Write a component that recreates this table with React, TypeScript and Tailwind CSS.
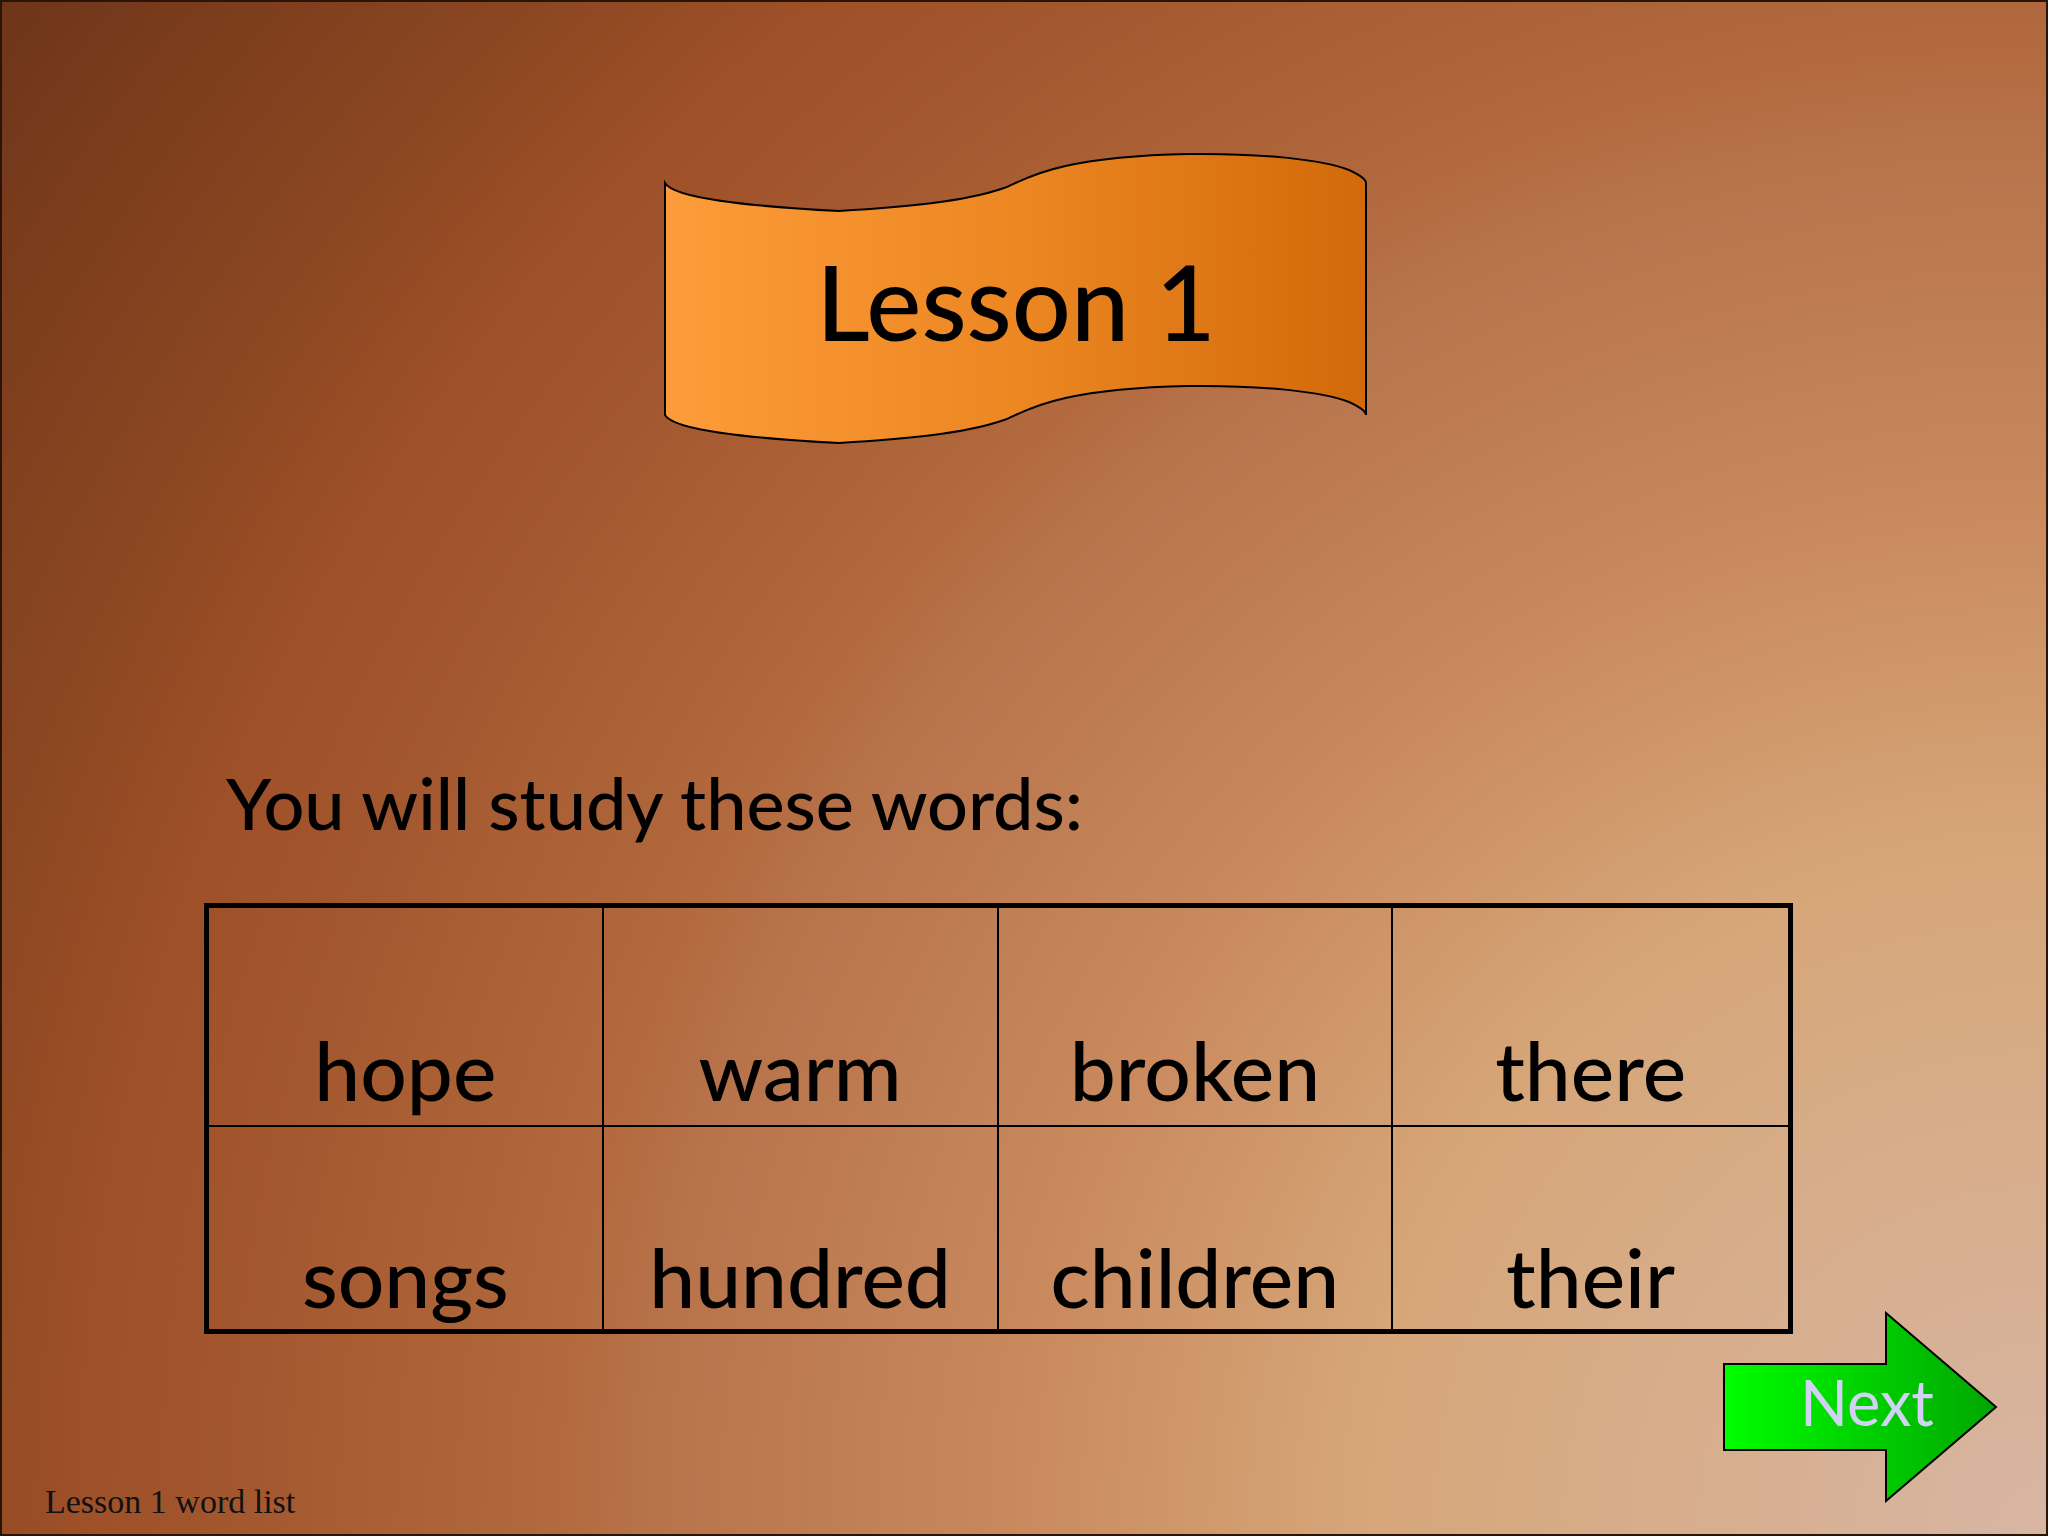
import React from 'react'

const WORDS = [
  ['hope', 'warm', 'broken', 'there'],
  ['songs', 'hundred', 'children', 'their'],
]

// ribbon banner, drawn in local coords of a 704x294 box
const BANNER =
  'M 1 31 C 10 46, 80 54, 175 59 C 240 55, 300 50, 340 36 C 360 29, 385 5, 524 2 C 600 1, 660 8, 685 18 C 698 24, 702 28, 702 31 ' +
  'L 702 263 C 702 260, 698 256, 685 250 C 660 240, 600 233, 524 234 C 385 237, 360 261, 340 268 C 300 282, 240 287, 175 291 C 80 286, 10 278, 1 263 Z'

function Banner() {
  return (
    <div className="relative ml-[662px] mt-[150px] h-[294px] w-[704px]">
      <svg className="absolute inset-0" width="704" height="294" viewBox="0 0 704 294">
        <defs>
          <linearGradient id="bannerFill" x1="0" y1="0" x2="1" y2="0">
            <stop offset="0%" stopColor="#fd9c3a" />
            <stop offset="50%" stopColor="#ec8722" />
            <stop offset="100%" stopColor="#d2690a" />
          </linearGradient>
        </defs>
        <path d={BANNER} fill="url(#bannerFill)" stroke="#000" strokeWidth="2" />
      </svg>
      <div className="relative flex justify-center pt-[97px] font-['Lato','Noto_Sans',sans-serif] text-[104px] leading-none font-medium text-black">
        Lesson 1
      </div>
    </div>
  )
}

function NextArrow() {
  return (
    <div className="relative ml-auto mr-[48px] h-[192px] w-[276px]">
      <svg className="absolute inset-0" width="276" height="192" viewBox="0 0 276 192">
        <defs>
          <linearGradient id="arrowFill" x1="0" y1="0" x2="1" y2="0">
            <stop offset="0%" stopColor="#00ff00" />
            <stop offset="100%" stopColor="#00a600" />
          </linearGradient>
        </defs>
        <path
          d="M 2 53 L 164 53 L 164 2 L 274 96 L 164 190 L 164 139 L 2 139 Z"
          fill="url(#arrowFill)"
          stroke="#000"
          strokeWidth="2"
        />
      </svg>
      <div className="relative pl-[78px] pt-[59px] font-['Lato','Noto_Sans',sans-serif] text-[63px] leading-none text-[#d2d2f4]">
        Next
      </div>
    </div>
  )
}

export default function App() {
  return (
    <div className="flex h-[1536px] w-[2048px] flex-col overflow-hidden border-2 border-[#2a1408] bg-[radial-gradient(circle_at_100%_100%,#d8b6a4_0%,#d6a678_27%,#c98a5e_40%,#b7724a_55%,#b36a3e_58%,#a4582f_70%,#9e5028_77%,#8e4822_83%,#6e3519_100%)]">
      <Banner />

      <div className="ml-[224px] mt-[320px] font-['Lato','Noto_Sans',sans-serif] text-[72px] leading-none font-medium text-black">
        You will study these words:
      </div>

      {/* word table */}
      <div className="ml-[202px] mt-[65px] w-[1589px] border-[5px] border-black">
        {WORDS.map((row, r) => (
          <div key={r} className={`grid grid-cols-4 ${r === 0 ? 'h-[219px] border-b-2 border-black' : 'h-[202px]'}`}>
            {row.map((w, c) => (
              <div
                key={w}
                className={`flex items-end justify-center ${c < 3 ? 'border-r-2 border-black' : ''} ${r === 0 ? 'pb-[15px]' : 'pb-[12px]'}`}
              >
                <span className="font-['Lato','Noto_Sans',sans-serif] text-[82px] leading-none font-medium text-black">{w}</span>
              </div>
            ))}
          </div>
        ))}
      </div>

      <div className="mt-[-23px] flex items-start">
        <div className="ml-[43px] mt-[174px] font-['Liberation_Serif','Times_New_Roman',serif] text-[34px] leading-none text-[#111]">
          Lesson 1 word list
        </div>
        <NextArrow />
      </div>
    </div>
  )
}
